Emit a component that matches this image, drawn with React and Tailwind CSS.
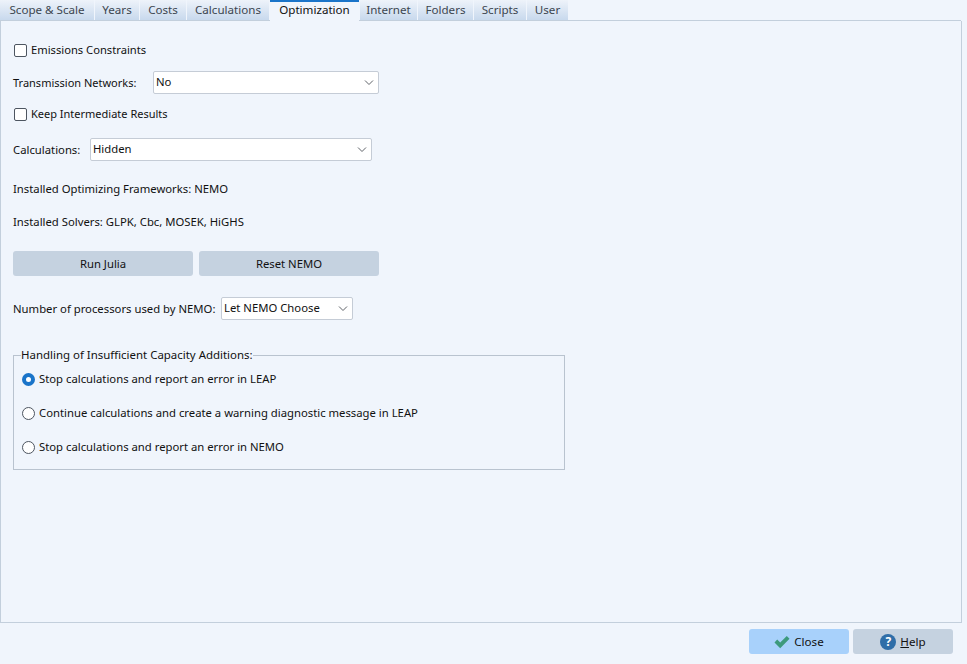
import React from "react";

const TABS = [
  ["Scope & Scale", "w-[94px]"],
  ["Years", "w-[44px]"],
  ["Costs", "w-[46px]"],
  ["Calculations", "w-[82px]"],
  ["Optimization", "w-[89px]"],
  ["Internet", "w-[57px]"],
  ["Folders", "w-[55px]"],
  ["Scripts", "w-[52px]"],
  ["User", "w-[41px]"],
];

function Chevron() {
  return (
    <svg width="10" height="6" viewBox="0 0 10 6" fill="none" stroke="#5f6368" strokeWidth="1">
      <path d="M1 0.5 L5 4.5 L9 0.5" />
    </svg>
  );
}

function Select({ value, className }) {
  return (
    <div className={`flex h-[23px] items-center justify-between bg-white border border-[#c5ccd6] rounded-[2px] pl-[2px] pr-[4px] ${className}`}>
      <span className="pb-[1px]">{value}</span>
      <Chevron />
    </div>
  );
}

function Check({ label, className }) {
  return (
    <div className="flex items-center gap-[4px] pl-[1px] h-[16px]">
      <span className="w-[13px] h-[13px] border border-[#4d5560] rounded-[2px] bg-white" />
      <span className={className}>{label}</span>
    </div>
  );
}

function Radio({ label, on }) {
  return (
    <div className="flex items-center gap-[4px] h-[16px]">
      {on ? (
        <span className="w-[13px] h-[13px] rounded-full bg-white border-[4px] border-[#1a74c9]" />
      ) : (
        <span className="w-[13px] h-[13px] rounded-full bg-white border border-[#4d5560]" />
      )}
      <span>{label}</span>
    </div>
  );
}

export default function App() {
  return (
    <div className="w-[967px] h-[664px] overflow-hidden flex flex-col bg-[#f0f5fc] text-[#111] text-[11.3px] leading-[16px] font-['Noto_Sans',sans-serif]">
      <div className="flex h-[21px] gap-[1px] shrink-0 w-[961px] border-b border-[#c3cfdc] text-[11.6px]">
        {TABS.map(([name, w]) =>
          name === "Optimization" ? (
            <div key={name} className={`${w} h-[21px] -mb-[1px] bg-[#f0f5fc] border-t-2 border-[#1a74c9] text-center text-[#111] leading-[15px]`}>
              {name}
            </div>
          ) : (
            <div key={name} className={`${w} h-[20px] bg-linear-to-b from-[#eef3fa] to-[#c8d9ed] text-center text-[#3c4650] leading-[19px]`}>
              {name}
            </div>
          )
        )}
      </div>

      <div className="w-[962px] h-[602px] shrink-0 border-r border-b border-l border-[#c3cfdc] pl-[12px] pt-[21px]">
        <Check label="Emissions Constraints" className="text-[11.2px]" />

        <div className="flex items-center mt-[13px] h-[23px]">
          <span className="w-[140px] text-[11px]">Transmission Networks:</span>
          <Select value="No" className="w-[226px]" />
        </div>

        <div className="mt-[12px]">
          <Check label="Keep Intermediate Results" className="text-[11px]" />
        </div>

        <div className="flex items-center mt-[16px] h-[23px]">
          <span className="w-[77px]">Calculations:</span>
          <Select value="Hidden" className="w-[282px]" />
        </div>

        <div className="mt-[20px]">Installed Optimizing Frameworks: NEMO</div>
        <div className="mt-[17px]">Installed Solvers: GLPK, Cbc, MOSEK, HiGHS</div>

        <div className="flex gap-[6px] mt-[21px]">
          <div className="w-[180px] h-[25px] flex items-center justify-center bg-[#c5d2e0] rounded-[3px]">Run Julia</div>
          <div className="w-[180px] h-[25px] flex items-center justify-center bg-[#c5d2e0] rounded-[3px]">Reset NEMO</div>
        </div>

        <div className="flex items-center mt-[21px] h-[23px]">
          <span className="w-[208px]">Number of processors used by NEMO:</span>
          <Select value="Let NEMO Choose" className="w-[132px]" />
        </div>

        <fieldset className="w-[552px] h-[122px] mt-[28px] border border-[#b9c3cf] pl-[7px] pt-[9px] m-0">
          <legend className="px-0 leading-[14px] text-[11.45px]">Handling of Insufficient Capacity Additions:</legend>
          <div className="flex flex-col gap-[18px] ml-[1px]">
            <Radio label="Stop calculations and report an error in LEAP" on />
            <Radio label="Continue calculations and create a warning diagnostic message in LEAP" />
            <Radio label="Stop calculations and report an error in NEMO" />
          </div>
        </fieldset>
      </div>

      <div className="flex justify-end gap-[4px] pr-[14px] pt-[6px] text-[11.6px]">
        <div className="w-[100px] h-[25px] flex items-center justify-center gap-[4px] bg-[#a8d1fb] rounded-[3px]">
          <svg width="16" height="14" viewBox="0 0 16 14">
            <path d="M0.5 7.5 L3.2 4.6 L6.2 7.6 L12.8 1 L15.5 3.8 L6.2 13.2 Z" fill="#3d9a7c" />
          </svg>
          <span>Close</span>
        </div>
        <div className="w-[100px] h-[25px] flex items-center justify-center gap-[4px] bg-[#c5d2e0] rounded-[3px]">
          <span className="w-[16px] h-[16px] rounded-full bg-[#2f6ea8] text-white font-bold text-[12px] leading-[16px] text-center">?</span>
          <span><span className="underline">H</span>elp</span>
        </div>
      </div>
    </div>
  );
}
